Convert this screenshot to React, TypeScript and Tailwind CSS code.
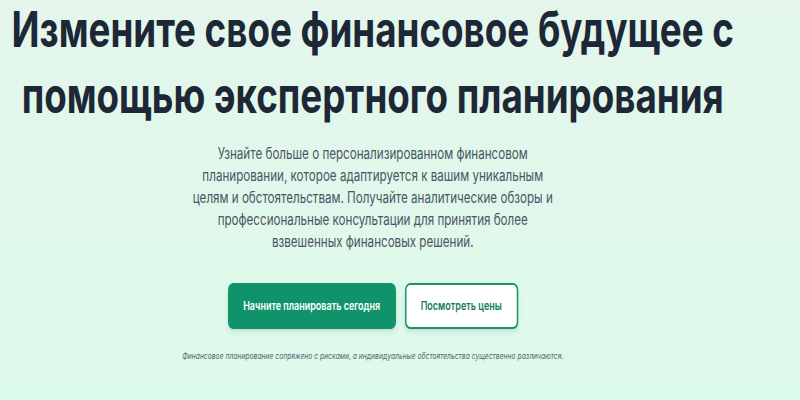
import React from "react";

export default function App() {
  return (
    <main className="min-h-screen w-full overflow-hidden bg-gradient-to-b from-[#e4f6ec] to-[#dcfaea] font-['Inter','Noto_Sans',sans-serif]">
      {/* hero block, drawn wide and narrowed horizontally */}
      <section className="w-[994px] origin-top-left scale-x-75 flex flex-col items-center text-center">
        <h1 className="flex flex-col gap-[6px] text-[49px] leading-[60px] font-bold text-[#1d2735]">
          <span>Измените свое финансовое будущее с</span>
          <span>помощью экспертного планирования</span>
        </h1>

        <p className="mt-[17px] text-[15.5px] leading-[22px] text-[#4b5563]">
          Узнайте больше о персонализированном финансовом
          <br />
          планировании, которое адаптируется к вашим уникальным
          <br />
          целям и обстоятельствам. Получайте аналитические обзоры и
          <br />
          профессиональные консультации для принятия более
          <br />
          взвешенных финансовых решений.
        </p>

        <div className="mt-[30px] flex items-center gap-[12px]">
          <button className="h-[46px] w-[224px] rounded-[7px] bg-[#10936a] text-[12px] font-semibold text-white shadow-md shadow-emerald-900/10">
            Начните планировать сегодня
          </button>
          <button className="h-[46px] w-[151px] rounded-[7px] border-2 border-[#18936b] bg-white text-[12px] font-semibold text-[#137a58] shadow-md shadow-emerald-900/10">
            Посмотреть цены
          </button>
        </div>

        <p className="mt-[20px] text-[9px] italic text-[#5b6470]">
          Финансовое планирование сопряжено с рисками, а индивидуальные обстоятельства существенно различаются.
        </p>
      </section>
    </main>
  );
}
